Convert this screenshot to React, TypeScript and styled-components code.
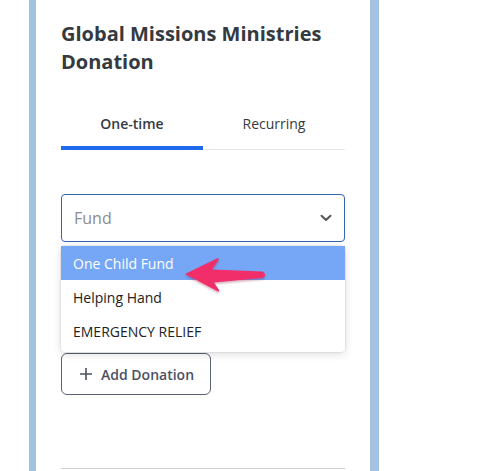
import React, { useState } from "react";
import styled, { createGlobalStyle } from "styled-components";

const GlobalStyle = createGlobalStyle`
  body {
    margin: 0;
    background: #fff;
    font-family: "Open Sans", "Noto Sans", sans-serif;
  }
`;

const funds = ["One Child Fund", "Helping Hand", "EMERGENCY RELIEF"];

const App = () => {
  const [tab, setTab] = useState("one");

  return (
    <>
      <GlobalStyle />
      <Frame>
        <Panel>
          <Title>Global Missions Ministries Donation</Title>
          <Tabs>
            <Tab active={tab === "one"} onClick={() => setTab("one")}>
              One-time
            </Tab>
            <Tab active={tab === "rec"} onClick={() => setTab("rec")}>
              Recurring
            </Tab>
          </Tabs>
          <SelectWrap>
            <Select>
              <Placeholder>Fund</Placeholder>
              <svg width="12" height="8" viewBox="0 0 12 8">
                <path
                  d="M1.5 1.8 L6 6 L10.5 1.8"
                  fill="none"
                  stroke="#555"
                  strokeWidth="2"
                  strokeLinecap="round"
                  strokeLinejoin="round"
                />
              </svg>
            </Select>
            <Menu>
              {funds.map((f, i) => (
                <Option key={f} highlighted={i === 0}>
                  {f}
                </Option>
              ))}
              <Pointer width="84" height="40" viewBox="0 0 84 40">
                <defs>
                  <filter id="sh" x="-20%" y="-20%" width="140%" height="150%">
                    <feDropShadow dx="0" dy="1.5" stdDeviation="1.2" floodColor="#7a1030" floodOpacity="0.35" />
                  </filter>
                </defs>
                <path
                  filter="url(#sh)"
                  d="M2 23 L35 7 Q36 7 35.5 9 L29 18.5 L79 20.5 Q82 21.5 82 24 Q81.5 27 79 27 L31 31.5 L36 39 Q36.5 41 35 40.5 Z"
                  fill="#f22e6a"
                />
              </Pointer>
            </Menu>
          </SelectWrap>
          <AddButton>
            <svg width="14" height="14" viewBox="0 0 14 14">
              <path d="M7 1 V13 M1 7 H13" stroke="#4b5163" strokeWidth="1.6" />
            </svg>
            Add Donation
          </AddButton>
          <Divider />
        </Panel>
      </Frame>
    </>
  );
};

export default App;

const Frame = styled.div`
  margin-left: 29px;
  width: 334px;
  min-height: 471px;
  border-left: 7px solid #a3c2e1;
  border-right: 9px solid #a3c2e1;
  background: #fff;
  box-sizing: content-box;
`;

const Panel = styled.div`
  padding: 20px 25px 0;
  display: flex;
  flex-direction: column;
`;

const Title = styled.h2`
  margin: 0;
  font-size: 20px;
  line-height: 28px;
  font-weight: 700;
  color: #343a40;
`;

const Tabs = styled.div`
  margin-top: 27px;
  display: flex;
  border-bottom: 1px solid #e8e8e8;
`;

const Tab = styled.button<{ active?: boolean }>`
  flex: 1;
  background: none;
  border: none;
  border-bottom: 4px solid ${(p) => (p.active ? "#1f6aec" : "transparent")};
  padding: 11px 0 12px;
  margin-bottom: -1px;
  font-family: inherit;
  font-size: 14px;
  line-height: 20px;
  font-weight: ${(p) => (p.active ? 600 : 400)};
  color: #343a40;
  cursor: pointer;
`;

const SelectWrap = styled.div`
  position: relative;
  margin-top: 44px;
`;

const Select = styled.div`
  height: 48px;
  box-sizing: border-box;
  border: 1px solid #3463b4;
  border-radius: 4px;
  padding: 0 12px;
  display: flex;
  align-items: center;
  justify-content: space-between;
`;

const Placeholder = styled.span`
  font-size: 16px;
  color: #8c8c8c;
`;

const Menu = styled.div`
  position: absolute;
  top: 52px;
  left: 0;
  right: 0;
  background: #fff;
  border-radius: 4px;
  padding-bottom: 4px;
  box-shadow: 0 2px 8px rgba(0, 0, 0, 0.14), 0 0 0 1px rgba(0, 0, 0, 0.05);
  z-index: 2;
`;

const Option = styled.div<{ highlighted?: boolean }>`
  height: 34px;
  display: flex;
  align-items: center;
  padding: 0 12px;
  font-size: 14px;
  color: ${(p) => (p.highlighted ? "#fff" : "#222")};
  background: ${(p) => (p.highlighted ? "#76a7f6" : "transparent")};
`;

const Pointer = styled.svg`
  position: absolute;
  left: 122px;
  top: 5px;
  overflow: visible;
`;

const AddButton = styled.button`
  margin-top: 111px;
  align-self: flex-start;
  height: 42px;
  box-sizing: border-box;
  padding: 0 16px 0 17px;
  display: flex;
  align-items: center;
  gap: 8px;
  background: #fff;
  border: 1px solid #5b6172;
  border-radius: 6px;
  font-family: inherit;
  font-size: 14px;
  font-weight: 600;
  color: #4b5163;
`;

const Divider = styled.div`
  margin-top: 73px;
  height: 1px;
  background: #cfcfcf;
`;
